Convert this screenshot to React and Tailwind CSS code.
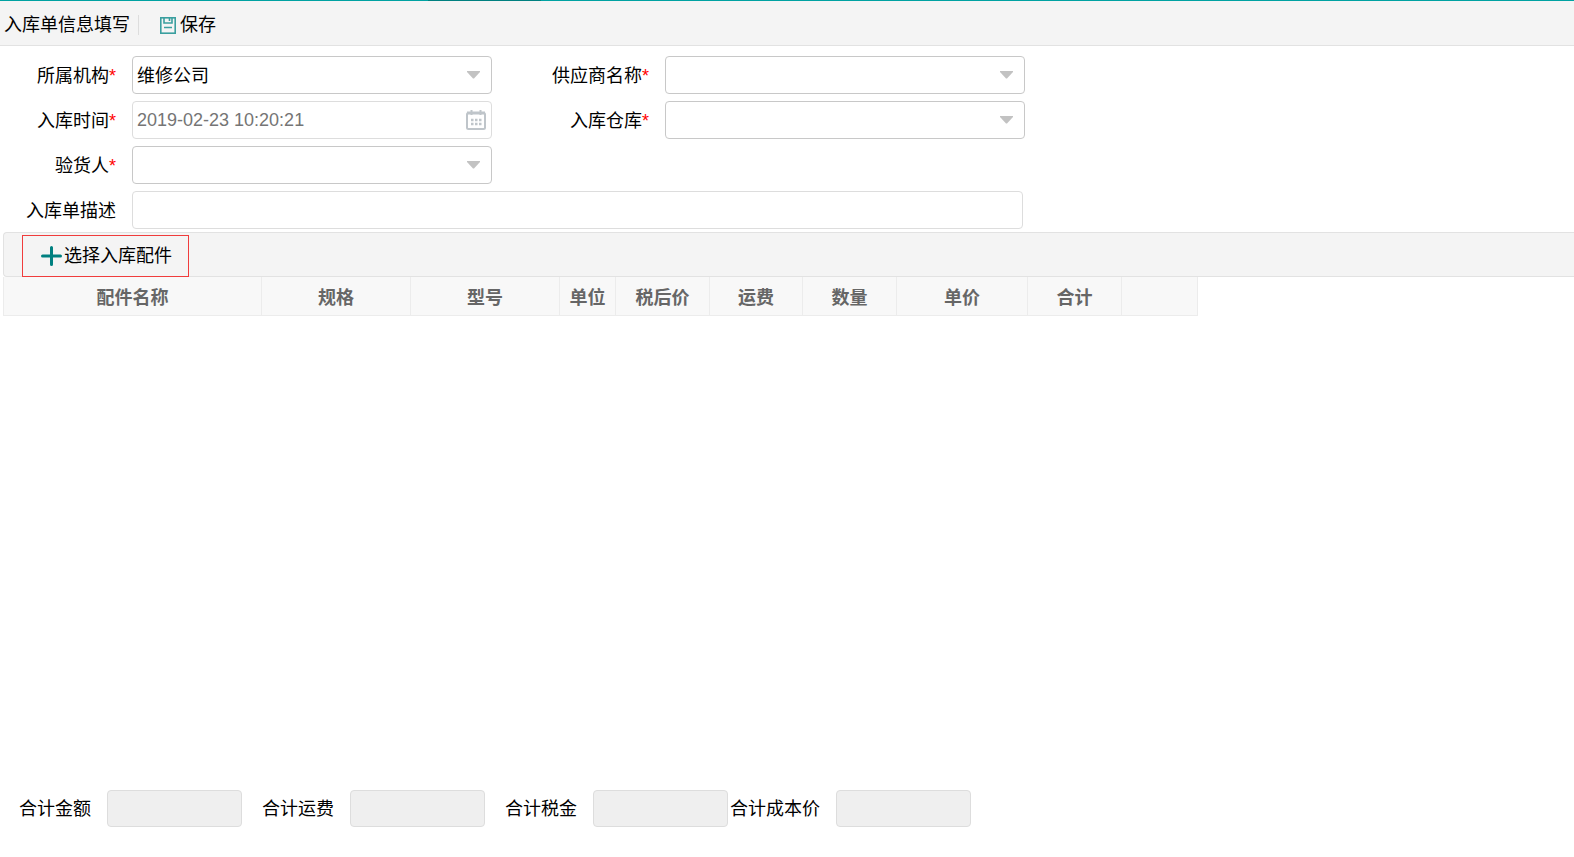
const cjk = `font-['Liberation_Sans','Noto_Sans_CJK_SC',sans-serif]`

const columns = [
  { title: '配件名称', width: 'w-[258px]' },
  { title: '规格', width: 'w-[149px]' },
  { title: '型号', width: 'w-[149px]' },
  { title: '单位', width: 'w-[56px]' },
  { title: '税后价', width: 'w-[94px]' },
  { title: '运费', width: 'w-[93px]' },
  { title: '数量', width: 'w-[94px]' },
  { title: '单价', width: 'w-[131px]' },
  { title: '合计', width: 'w-[94px]' },
  { title: '', width: 'w-[76px]' },
]

const totals = [
  { id: 'amount', label: '合计金额' },
  { id: 'freight', label: '合计运费' },
  { id: 'tax', label: '合计税金' },
  { id: 'cost', label: '合计成本价' },
]

function SaveIcon() {
  return (
    <svg width="16" height="17" viewBox="0 0 16 17" fill="none" stroke="#3a9f9f" strokeWidth="1.6">
      <rect x="0.8" y="0.8" width="14.4" height="15.4" />
      <path d="M4 1v5h8V1M9.5 1v3M4 10.5h8" />
    </svg>
  )
}

function PlusIcon() {
  return (
    <svg width="21" height="20" viewBox="0 0 21 20" fill="none" stroke="#008080" strokeWidth="3" strokeLinecap="round">
      <path d="M10.5 1.5v17M1.5 10h18" />
    </svg>
  )
}

function CalendarIcon() {
  return (
    <svg width="20" height="20" viewBox="0 0 20 20" fill="none" stroke="#bfc5ca" strokeWidth="2">
      <rect x="1" y="3" width="18" height="16" rx="1.5" />
      <path d="M1 3h18" strokeWidth="3" />
      <path d="M5.5 0v5M14.5 0v5" />
      <path d="M5 10h2.5M9 10h2.5M13 10h2.5M5 14h2.5M9 14h2.5M13 14h2.5" strokeWidth="2.5" />
    </svg>
  )
}

function Label({ htmlFor, required, children }) {
  return (
    <label htmlFor={htmlFor} className="text-right pt-[2px] pr-4 whitespace-nowrap">
      {children}
      {required && <span className="text-[#ff0000]">*</span>}
    </label>
  )
}

function Select({ id, options = [] }) {
  return (
    <div className="relative">
      <select
        id={id}
        className="appearance-none block w-full h-[38px] pt-[2px] pl-1 pr-8 bg-white border border-[#c8c8c8] rounded"
      >
        {options.map((o) => (
          <option key={o}>{o}</option>
        ))}
      </select>
      <svg
        className="absolute right-3 top-[15px] pointer-events-none"
        width="13"
        height="8"
        viewBox="0 0 13 8"
        fill="#c2c2c2"
      >
        <path d="M0 0h13v1L7 7.5H6L0 1z" />
      </svg>
    </div>
  )
}

export default function App() {
  return (
    <div className={`min-h-screen flex flex-col bg-white text-black text-[18px] leading-6 font-normal ${cjk}`}>
      {/* Tab strip edge */}
      <div className="h-px bg-[#00a2a2] flex">
        <div className="ml-[428px] w-[113px] bg-[#008080]" />
      </div>

      {/* Toolbar */}
      <header className="flex items-center h-[45px] pt-1 pl-1 bg-[#f4f4f4] border-b border-[#e2e2e2]">
        <h1>入库单信息填写</h1>
        <div className="w-px h-5 ml-2 bg-[#dddddd]" />
        <button className="flex items-center gap-1 ml-[21px]">
          <SaveIcon />
          保存
        </button>
      </header>

      {/* Form */}
      <form className="grid grid-cols-[132px_360px_173px_360px] items-center gap-y-[7px] pt-[10px] pb-[3px]">
        <Label htmlFor="org" required>所属机构</Label>
        <Select id="org" options={['维修公司']} />
        <Label htmlFor="supplier" required>供应商名称</Label>
        <Select id="supplier" />

        <Label htmlFor="time" required>入库时间</Label>
        <div className="relative">
          <input
            id="time"
            type="text"
            defaultValue="2019-02-23 10:20:21"
            className="block w-full h-[38px] pl-1 pr-8 border border-[#dddddd] rounded text-[#757575]"
          />
          <div className="absolute right-[6px] top-[9px] pointer-events-none">
            <CalendarIcon />
          </div>
        </div>
        <Label htmlFor="warehouse" required>入库仓库</Label>
        <Select id="warehouse" />

        <Label htmlFor="checker" required>验货人</Label>
        <Select id="checker" />
        <div className="col-span-2" />

        <Label htmlFor="desc">入库单描述</Label>
        <div className="col-span-3 pr-[2px]">
          <input
            id="desc"
            type="text"
            className="block w-full h-[38px] px-1 border border-[#dddddd] rounded"
          />
        </div>
      </form>

      {/* Parts */}
      <main className="flex-1 pl-[3px]">
        <div className="flex items-end h-[45px] pl-[18px] bg-[#f4f4f4] border border-r-0 border-[#e2e2e2] rounded-l-sm">
          <button className="flex items-center gap-[2px] h-[42px] -mb-px pl-[18px] pr-4 border border-[#f03c3c]">
            <PlusIcon />
            选择入库配件
          </button>
        </div>
        <table className="table-fixed w-[1194px] border-collapse">
          <thead>
            <tr className="h-[38px] bg-[#f8f8f8] text-[#666666]">
              {columns.map((c) => (
                <th key={c.title} className={`${c.width} pt-1 pb-0 px-0 border border-t-0 border-[#ececec] font-bold`}>
                  {c.title}
                </th>
              ))}
            </tr>
          </thead>
        </table>
      </main>

      {/* Totals */}
      <footer className="flex items-center gap-px pb-[30px]">
        {totals.map((t) => (
          <div key={t.id} className="flex items-center">
            <label htmlFor={t.id} className="w-[107px] pt-px pr-4 text-right whitespace-nowrap">
              {t.label}
            </label>
            <input
              id={t.id}
              type="text"
              readOnly
              className="w-[135px] h-[37px] px-1 bg-[#efefef] border border-[#dddddd] rounded"
            />
          </div>
        ))}
      </footer>
    </div>
  )
}
